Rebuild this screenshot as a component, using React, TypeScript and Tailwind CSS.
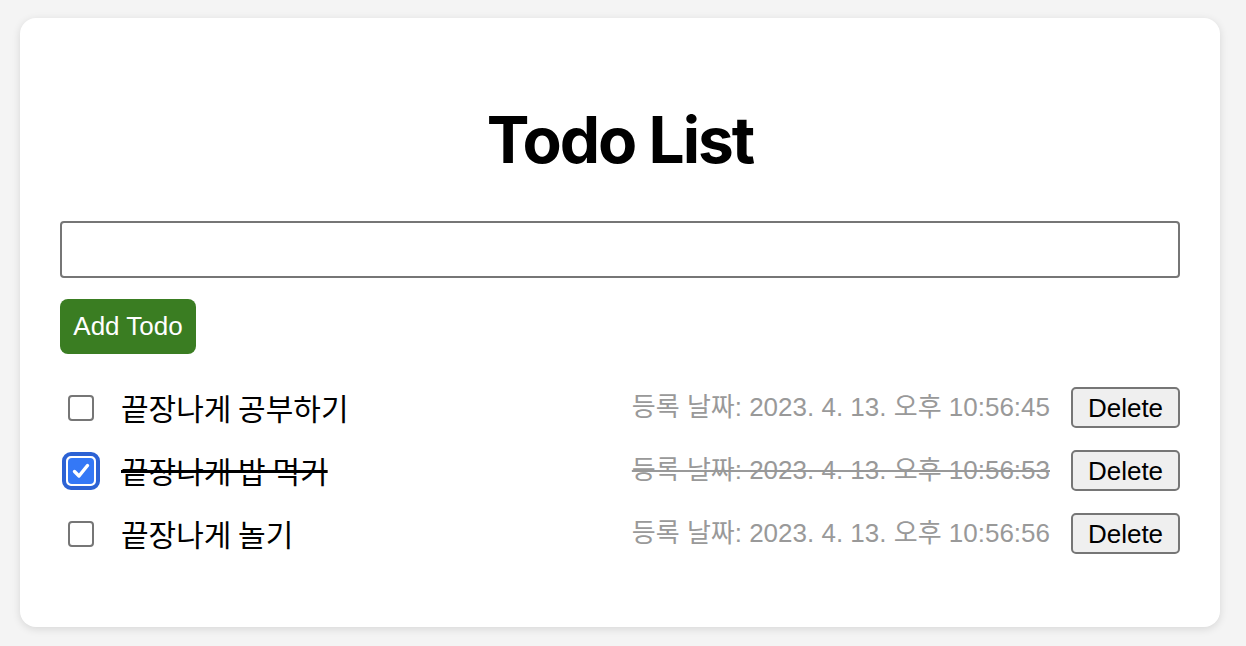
import React from "react";

type Todo = { text: string; date: string; done: boolean };

const todos: Todo[] = [
  { text: "끝장나게 공부하기", date: "등록 날짜: 2023. 4. 13. 오후 10:56:45", done: false },
  { text: "끝장나게 밥 먹기", date: "등록 날짜: 2023. 4. 13. 오후 10:56:53", done: true },
  { text: "끝장나게 놀기", date: "등록 날짜: 2023. 4. 13. 오후 10:56:56", done: false },
];

function Check({ checked }: { checked: boolean }) {
  if (checked) {
    return (
      <div className="w-[38px] h-[38px] -mx-[6px] rounded-[9px] border-[4px] border-[#2c62d4] bg-white flex items-center justify-center">
        <div className="w-[26px] h-[26px] rounded-[4px] bg-[#3478f6] flex items-center justify-center">
          <svg width="22" height="22" viewBox="0 0 22 22">
            <path d="M4.5 11.5 L9 16 L17.5 5.5" fill="none" stroke="white" strokeWidth="3.4" strokeLinecap="round" strokeLinejoin="round" />
          </svg>
        </div>
      </div>
    );
  }
  return <div className="w-[26px] h-[26px] rounded-[4px] border-2 border-[#767676] bg-white" />;
}

export default function App() {
  return (
    <div className="min-h-[646px] w-full bg-[#f4f4f4] pt-[18px] px-[20px] font-['Liberation_Sans','Noto_Sans_CJK_KR',sans-serif]">
      <div className="w-[1200px] h-[609px] bg-white rounded-[16px] shadow-[0_2px_8px_rgba(0,0,0,0.12)] px-[40px] pt-[90px]">
        <h1 className="h-[64px] leading-[64px] text-center text-[64px] font-bold text-black font-['Inter',sans-serif] tracking-[-2px]">
          Todo List
        </h1>
        <input
          type="text"
          className="mt-[49px] block w-[1120px] h-[57px] border-2 border-[#767676] rounded-[4px] outline-none"
        />
        <button className="mt-[21px] block w-[136px] h-[55px] bg-[#3a7d22] text-white text-[26px] rounded-[8px]">
          Add Todo
        </button>
        <div className="mt-[33px] flex flex-col gap-[22px]">
          {todos.map((t, i) => (
            <div key={i} className="flex items-center h-[41px]">
              <div className="ml-[8px] flex items-center">
                <Check checked={t.done} />
              </div>
              <span
                className={
                  "ml-[27px] text-[30px] leading-[41px] text-black font-['Noto_Sans_CJK_KR',sans-serif]" +
                  (t.done ? " line-through" : "")
                }
              >
                {t.text}
              </span>
              <span
                className={"ml-auto text-[26px] leading-[41px] text-[#999999]" + (t.done ? " line-through" : "")}
              >
                {t.date}
              </span>
              <button className="ml-[21px] w-[109px] h-[41px] bg-[#efefef] border-2 border-[#767676] rounded-[5px] text-[26px] text-black leading-none">
                Delete
              </button>
            </div>
          ))}
        </div>
      </div>
    </div>
  );
}
